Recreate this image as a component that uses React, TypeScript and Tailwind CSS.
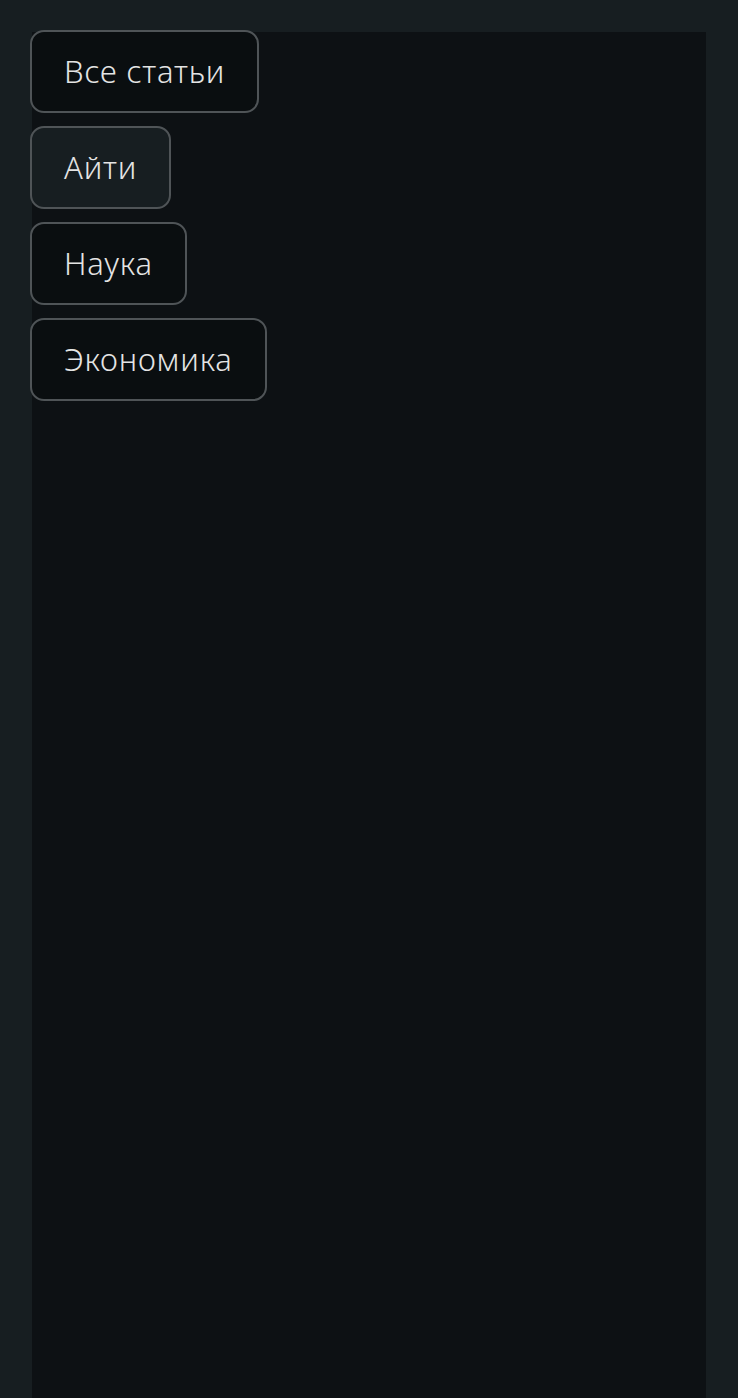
const categories = [
  { name: "Все статьи", active: false },
  { name: "Айти", active: true },
  { name: "Наука", active: false },
  { name: "Экономика", active: false },
];

export default function App() {
  return (
    <div className="min-h-screen bg-[#171e21] p-8 pb-0 flex flex-col" style={{ fontFamily: '"Noto Sans", "Open Sans", sans-serif' }}>
      <div className="flex-1 min-h-[1366px] bg-[#0d1114]">
        <div className="-ml-[2px] -mt-[2px] flex flex-col items-start gap-[13px]">
          {categories.map((cat) => (
            <button
              key={cat.name}
              className={
                "h-[83px] px-8 rounded-[14px] border-2 border-[#4f5457] text-[31px] font-[350] tracking-[0.8px] text-[#e4e4e4] leading-none " +
                (cat.active ? "bg-[#171e21]" : "bg-[#0a0e10]")
              }
            >
              {cat.name}
            </button>
          ))}
        </div>
      </div>
    </div>
  );
}
